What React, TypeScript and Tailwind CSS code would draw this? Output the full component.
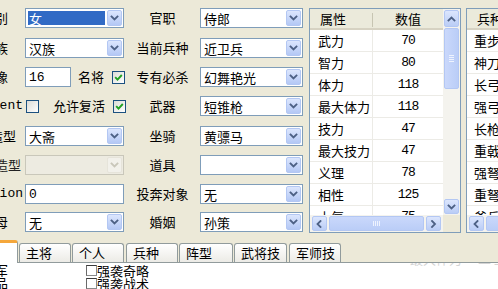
import React from "react";

const CJK = "font-['Noto_Sans_CJK_SC',sans-serif]";
const MONO = "font-['Liberation_Mono','Noto_Sans_CJK_SC',monospace]";

function Chev({ dir = "down", color = "#4D6185" }: { dir?: "down" | "up" | "left" | "right"; color?: string }) {
  const d = {
    down: "M1.5 2.5 L4.5 5.5 L7.5 2.5",
    up: "M1.5 5.5 L4.5 2.5 L7.5 5.5",
    left: "M5.5 1 L2.5 4 L5.5 7",
    right: "M3 1 L6 4 L3 7",
  }[dir];
  return (
    <svg width="9" height="8" viewBox="0 0 9 8">
      <path d={d} fill="none" stroke={color} strokeWidth="1.8" strokeLinecap="square" />
    </svg>
  );
}

function DropBtn({ disabled }: { disabled?: boolean }) {
  return (
    <div
      className={
        "w-[15px] h-full shrink-0 rounded-[2px] border flex items-center justify-center " +
        (disabled
          ? "border-[#E6E4DA] bg-[#F2F1EB]"
          : "border-[#B3C7F3] bg-linear-to-b from-[#DCE6FD] to-[#B4C8F5]")
      }
    >
      <Chev color={disabled ? "#C9C7BA" : "#4D6185"} />
    </div>
  );
}

function Combo({
  value,
  selected,
  disabled,
  className = "",
}: {
  value?: string;
  selected?: boolean;
  disabled?: boolean;
  className?: string;
}) {
  return (
    <div
      className={
        "flex h-[20px] shrink-0 border p-[1px] " +
        (disabled ? "border-[#C9C7BA] bg-[#EDEBE1]" : "border-[#7F9DB9] bg-white") +
        " " +
        className
      }
    >
      <div className="flex-1 min-w-0 flex items-stretch pl-[1px] pr-[2px] py-[1px]">
        <div
          className={
            "flex-1 flex items-center pl-[1px] leading-none whitespace-nowrap " +
            (selected ? "bg-[#316AC5] text-white" : "")
          }
        >
          {value}
        </div>
      </div>
      <DropBtn disabled={disabled} />
    </div>
  );
}

function TextBox({ value, className = "" }: { value: string; className?: string }) {
  return (
    <div
      className={
        "h-[20px] shrink-0 border border-[#7F9DB9] bg-white flex items-center pl-[3px] text-[13px] leading-none " +
        MONO +
        " " +
        className
      }
    >
      {value}
    </div>
  );
}

function XPCheck({ checked }: { checked?: boolean }) {
  return (
    <div className="w-[13px] h-[13px] shrink-0 border border-[#1C5180] bg-linear-to-br from-[#DCDCD7] to-white flex items-center justify-center">
      {checked && (
        <svg width="9" height="9" viewBox="0 0 9 9">
          <path d="M1.2 4.2 L3.5 6.6 L7.8 2" stroke="#21A121" strokeWidth="1.9" fill="none" />
        </svg>
      )}
    </div>
  );
}

function Label({ text, w = 25, end, className = "" }: { text: string; w?: number; end: string; className?: string }) {
  return (
    <div className={"h-full flex items-center justify-end whitespace-nowrap shrink-0 " + end + " " + className} style={{ width: w }}>
      {text}
    </div>
  );
}

function ScrollBtn({ dir, className = "" }: { dir: "up" | "down" | "left" | "right"; className?: string }) {
  return (
    <div
      className={
        "shrink-0 rounded-[2px] border border-[#B3C7F3] bg-linear-to-b from-[#DCE6FD] to-[#BACDF6] flex items-center justify-center " +
        className
      }
    >
      <Chev dir={dir} />
    </div>
  );
}

function VScroll() {
  return (
    <div className="w-[17px] shrink-0 bg-[#F4F3EE] flex flex-col items-center pt-[1px] pb-[1px]">
      <ScrollBtn dir="up" className="w-[15px] h-[17px]" />
      <div className="w-[15px] h-[61px] mt-[1px] rounded-[2px] border border-[#B3C7F3] bg-linear-to-r from-[#CAD8FB] to-[#BACDF7] flex flex-col items-center justify-center gap-[1px]">
        <div className="w-[5px] h-[1px] bg-[#EEF3FE]" />
        <div className="w-[5px] h-[1px] bg-[#EEF3FE]" />
        <div className="w-[5px] h-[1px] bg-[#EEF3FE]" />
        <div className="w-[5px] h-[1px] bg-[#EEF3FE]" />
      </div>
      <div className="flex-1" />
      <ScrollBtn dir="down" className="w-[15px] h-[15px]" />
    </div>
  );
}

function HScroll({ thumbW }: { thumbW: number }) {
  return (
    <div className="flex-1 h-[17px] bg-[#F4F3EE] flex items-center px-[2px] min-w-0">
      <ScrollBtn dir="left" className="w-[15px] h-[15px]" />
      <div
        className="h-[15px] ml-[2px] shrink-0 rounded-[2px] border border-[#B3C7F3] bg-linear-to-b from-[#CAD8FB] to-[#BACDF7] flex items-center justify-center gap-[1px]"
        style={{ width: thumbW }}
      >
        <div className="w-[1px] h-[5px] bg-[#EEF3FE]" />
        <div className="w-[1px] h-[5px] bg-[#EEF3FE]" />
        <div className="w-[1px] h-[5px] bg-[#EEF3FE]" />
        <div className="w-[1px] h-[5px] bg-[#EEF3FE]" />
      </div>
      <div className="flex-1" />
      <ScrollBtn dir="right" className="w-[15px] h-[15px]" />
    </div>
  );
}

const attrs: [string, string][] = [
  ["武力", "70"],
  ["智力", "80"],
  ["体力", "118"],
  ["最大体力", "118"],
  ["技力", "47"],
  ["最大技力", "47"],
  ["义理", "78"],
  ["相性", "125"],
  ["士气", "75"],
];

const troops = ["重步兵", "神刀兵", "长弓兵", "强弓兵", "长枪兵", "重戟兵", "强弩兵", "重弩兵", "斧兵"];

function AttrTable() {
  return (
    <div className="w-[152px] h-[225px] shrink-0 border border-[#7F9DB9] bg-white flex flex-col">
      <div className="flex flex-1 min-h-0">
        <div className="flex-1 min-w-0 flex flex-col overflow-hidden">
          <div className="h-[21px] shrink-0 flex bg-[#EBEADB] border-b-[2px] border-[#D6D2C2]">
            <div className="w-[63px] pl-[10px] flex items-center relative">
              属性
              <div className="absolute right-0 top-[4px] h-[14px] w-[1px] bg-[#C7C5B2]" />
            </div>
            <div className="flex-1 flex items-center justify-center">数值</div>
          </div>
          {attrs.map(([k, v]) => (
            <div key={k} className="h-[22px] shrink-0 flex border-b border-[#ECEBE6]">
              <div className="w-[63px] pl-[8px] flex items-center border-r border-[#ECEBE6] whitespace-nowrap">{k}</div>
              <div className={"flex-1 flex items-center justify-center text-[13px] tracking-[-1px] " + MONO}>{v}</div>
            </div>
          ))}
        </div>
        <VScroll />
      </div>
      <div className="flex h-[17px] shrink-0">
        <HScroll thumbW={95} />
        <div className="w-[17px] bg-[#ECE9D8]" />
      </div>
    </div>
  );
}

function TroopTable() {
  return (
    <div className="w-[120px] h-[225px] shrink-0 border border-[#7F9DB9] bg-white flex flex-col">
      <div className="flex-1 min-h-0 flex flex-col overflow-hidden">
        <div className="h-[21px] shrink-0 flex bg-[#EBEADB] border-b-[2px] border-[#D6D2C2] items-center pl-[10px]">兵种</div>
        {troops.map((t) => (
          <div key={t} className="h-[22px] shrink-0 flex items-center pl-[7px] border-b border-[#ECEBE6] whitespace-nowrap">
            {t}
          </div>
        ))}
      </div>
      <div className="flex h-[17px] shrink-0">
        <HScroll thumbW={60} />
      </div>
    </div>
  );
}

function Tab({ label, className = "" }: { label: string; className?: string }) {
  return (
    <div
      className={
        "h-[19px] shrink-0 border border-b-0 border-[#919B9C] rounded-t-[3px] bg-linear-to-b from-white to-[#ECEBE6] pl-[6px] leading-[18px] whitespace-nowrap " +
        className
      }
    >
      {label}
    </div>
  );
}

function ListCheck({ label }: { label: string }) {
  return (
    <div className="h-[13px] flex items-center">
      <div className="w-[11px] h-[11px] border border-[#8A8A8A] border-t-[#3A3A3A] border-l-[#6A6A6A] bg-white shrink-0" />
      <span className="leading-[13px] ml-[0px]">{label}</span>
    </div>
  );
}

export default function App() {
  return (
    <div className={"w-[498px] h-[289px] overflow-hidden bg-[#ECE9D8] text-black text-[13px] flex flex-col " + CJK}>
      {/* top area */}
      <div className="h-[240px] shrink-0 flex pt-[8px] overflow-hidden">
        {/* left column */}
        <div className="w-[125px] shrink-0 flex flex-col">
          <div className="h-[20px] flex">
            <Label text="性别" end="pr-[17px]" />
            <Combo value="女" selected className="w-[99px]" />
          </div>
          <div className="h-[20px] flex mt-[10px]">
            <Label text="民族" end="pr-[17px]" />
            <Combo value="汉族" className="w-[99px]" />
          </div>
          <div className="h-[20px] flex mt-[9px] items-center">
            <Label text="头像" end="pr-[17px]" />
            <TextBox value="16" className="w-[46px]" />
            <span className="ml-[7px] whitespace-nowrap">名将</span>
            <div className="ml-[8px]">
              <XPCheck checked />
            </div>
          </div>
          <div className="h-[20px] flex mt-[9px] items-center">
            <Label text="Independent" w={26} end={"pr-[3px] " + MONO} />
            <XPCheck />
            <span className="ml-[14px] whitespace-nowrap">允许复活</span>
            <div className="ml-[8px]">
              <XPCheck checked />
            </div>
          </div>
          <div className="h-[20px] flex mt-[10px]">
            <Label text="默认造型" end="pr-[9px]" />
            <Combo value="大斋" className="w-[99px]" />
          </div>
          <div className="h-[20px] flex mt-[9px]">
            <Label text="战斗造型" end="pr-[4px]" className="text-[#222]" />
            <Combo disabled className="w-[99px]" />
          </div>
          <div className="h-[20px] flex mt-[9px]">
            <Label text="Position" end={"pr-[2px] " + MONO} />
            <TextBox value="0" className="w-[99px]" />
          </div>
          <div className="h-[20px] flex mt-[8px]">
            <Label text="父母" end="pr-[17px]" />
            <Combo value="无" className="w-[99px]" />
          </div>
        </div>

        {/* middle column */}
        <div className="w-[178px] shrink-0 flex flex-col">
          {[
            ["官职", "侍郎", "mt-[0px]"],
            ["当前兵种", "近卫兵", "mt-[10px]"],
            ["专有必杀", "幻舞艳光", "mt-[9px]"],
            ["武器", "短锥枪", "mt-[9px]"],
            ["坐骑", "黄骠马", "mt-[10px]"],
            ["道具", "", "mt-[9px]"],
            ["投奔对象", "无", "mt-[9px]"],
            ["婚姻", "孙策", "mt-[8px]"],
          ].map(([l, v, m]) => (
            <div key={l} className={"h-[20px] flex " + m}>
              <div className="w-[75px] shrink-0 flex items-center justify-center whitespace-nowrap">{l}</div>
              <Combo value={v} className="w-[103px]" />
            </div>
          ))}
        </div>

        <div className="ml-[6px] shrink-0">
          <AttrTable />
        </div>
        <div className="ml-[5px] shrink-0">
          <TroopTable />
        </div>
      </div>

      {/* tabs */}
      <div className="h-[22px] shrink-0 flex items-end">
        <div className="w-[18px] h-[23px] -mb-[1px] relative z-10 shrink-0 bg-white border-r border-[#919B9C] border-t-[3px] border-t-[#F5A73B] rounded-tr-[3px]" />
        <Tab label="主将" className="ml-[1px] w-[52px]" />
        <Tab label="个人" className="ml-[1px] w-[52px]" />
        <Tab label="兵种" className="ml-[2px] w-[52px]" />
        <Tab label="阵型" className="ml-[1px] w-[54px]" />
        <Tab label="武将技" className="ml-[1px] w-[53px]" />
        <Tab label="军师技" className="ml-[2px] w-[52px]" />
      </div>

      {/* tab content */}
      <div className="flex-1 bg-white border-t border-[#919B9C] relative flex">
        <div className="w-[25px] shrink-0 flex flex-col items-end pr-[17px] leading-[13px] whitespace-nowrap">
          <div>将军</div>
          <div>官品</div>
        </div>
        <div className="ml-[61px] flex flex-col pt-[1px]">
          <ListCheck label="强袭奇略" />
          <ListCheck label="强袭战术" />
        </div>
        <div className="absolute right-0 top-0 w-[88px] h-[3px] overflow-hidden">
          <div className="-mt-[11px] text-[#D4D4D4] leading-[13px] whitespace-nowrap">最大体力 一二 三四五</div>
        </div>
      </div>
    </div>
  );
}
